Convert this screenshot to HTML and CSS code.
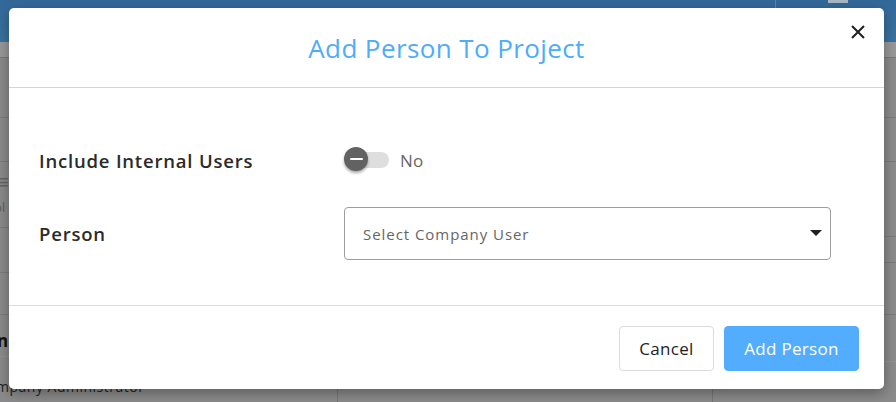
FILE: index.html
```html
<!DOCTYPE html>
<html lang="en">
<head>
<meta charset="utf-8">
<title>Add Person To Project</title>
<link rel="stylesheet" href="styles.css">
</head>
<body>
<div class="app">
  <div class="topbar">
    <div class="topbar-sep"></div>
    <div class="topbar-box"></div>
  </div>
  <div class="subbar"></div>
  <div class="table">
    <div class="col col-a">
      <div class="cell h60"></div>
      <div class="cell h44"></div>
      <div class="cell h66"><span class="menu-ic">&#8801;</span><span class="cell-txt">bl</span></div>
      <div class="cell h45"></div>
      <div class="cell h42"></div>
      <div class="cell h-last"><span class="bold-txt">n</span><span class="role-txt">mpany Administrator</span></div>
    </div>
    <div class="col col-b"></div>
    <div class="col col-c">
      <div class="cell h60"></div>
      <div class="cell h44"></div>
      <div class="cell h75"></div>
      <div class="cell h26"></div>
      <div class="cell h52"></div>
      <div class="cell h-dot"></div>
    </div>
  </div>
</div>

<div class="overlay">
  <div class="modal">
    <div class="modal-header">
      <h2 class="modal-title">Add Person To Project</h2>
      <button class="close-btn" aria-label="Close">
        <svg width="14" height="14" viewBox="0 0 14 14"><path d="M1 1L13 13M13 1L1 13" stroke="#1f1f1f" stroke-width="2" fill="none"/></svg>
      </button>
    </div>
    <div class="modal-body">
      <div class="form-row row-toggle">
        <label class="form-label">Include Internal Users</label>
        <div class="form-control toggle-wrap">
          <span class="switch"><span class="track"></span><span class="thumb"><span class="minus"></span></span></span>
          <span class="toggle-text">No</span>
        </div>
      </div>
      <div class="form-row row-select">
        <label class="form-label">Person</label>
        <div class="form-control">
          <div class="select">
            <span class="placeholder">Select Company User</span>
            <span class="caret"></span>
          </div>
        </div>
      </div>
    </div>
    <div class="modal-footer">
      <button class="btn btn-cancel">Cancel</button>
      <button class="btn btn-primary">Add Person</button>
    </div>
  </div>
</div>
</body>
</html>
```

FILE: styles.css
```css
* { box-sizing: border-box; }
html, body { margin: 0; padding: 0; }
body {
  width: 896px;
  height: 402px;
  overflow: hidden;
  position: relative;
  font-family: "Open Sans", "Noto Sans", sans-serif;
  background: #8a8a8a;
}

/* dimmed app behind the modal */
.app { display: flex; flex-direction: column; height: 402px; }
.topbar {
  height: 42px;
  background: linear-gradient(180deg, #33699a 0%, #3a74a0 100%);
  display: flex;
  justify-content: flex-end;
  align-items: flex-start;
  padding-right: 48px;
}
.topbar-sep { width: 1px; height: 10px; background: #5a88ad; margin-right: 52px; }
.topbar-box { width: 20px; height: 3px; background: #a9b8c4; }
.subbar { height: 16px; background: #999999; border-bottom: 1px solid #7a7a7a; }
.table { flex: 1; display: grid; grid-template-columns: 337px 375px 1fr; }
.col { display: flex; flex-direction: column; background: #8b8b8b; }
.col-b, .col-c { border-left: 1px solid #777; }
.cell { border-bottom: 1px solid #7b7b7b; position: relative; }
.h60 { height: 60px; }
.h44 { height: 44px; }
.h66 { height: 66px; }
.h45 { height: 45px; }
.h42 { height: 42px; }
.h75 { height: 75px; }
.h26 { height: 26px; }
.h52 { height: 52px; }
.h-last, .h-dot { flex: 1; border-bottom: 0; }
.h-dot::before {
  content: "";
  display: block;
  margin-top: 46px;
  border-top: 1px dotted #9a9a9a;
}
.menu-ic { position: absolute; left: -3px; top: 10px; font-size: 20px; color: #666; line-height: 1; }
.cell-txt { position: absolute; left: -6px; top: 36px; font-size: 13px; color: #5e5e5e; }
.bold-txt { position: absolute; left: -3px; top: 14px; font-size: 17px; font-weight: 700; color: #111; }
.role-txt { position: absolute; left: -4px; top: 62px; font-size: 14px; color: #222; letter-spacing: 0.5px; }
.h-last::after {
  content: "";
  position: absolute;
  left: 0; right: 0; top: 41px;
  border-top: 1px dotted #9a9a9a;
}

/* overlay + modal */
.overlay {
  position: absolute;
  inset: 0;
  padding: 8px 12px 0 9px;
}
.modal {
  width: 875px;
  height: 381px;
  background: #fff;
  border-radius: 5px;
  box-shadow: 0 4px 14px rgba(0, 0, 0, 0.35);
  display: flex;
  flex-direction: column;
}
.modal-header {
  height: 80px;
  border-bottom: 1px solid #d4d4d4;
  display: flex;
  align-items: center;
  justify-content: center;
  position: relative;
}
.modal-title {
  margin: 0;
  font-size: 26px;
  font-weight: 400;
  color: #4eacf8;
  letter-spacing: 0.4px;
}
.close-btn {
  position: absolute;
  right: 19px;
  top: 17px;
  border: 0;
  background: transparent;
  padding: 0;
  width: 14px;
  height: 14px;
  display: flex;
  cursor: pointer;
}

.modal-body {
  height: 218px;
  padding: 52px 53px 45px 30px;
  display: flex;
  flex-direction: column;
  gap: 27px;
  border-bottom: 1px solid #dcdcdc;
}
.form-row { display: flex; align-items: center; }
.row-toggle { height: 40px; }
.row-select { height: 53px; }
.form-label {
  width: 305px;
  font-size: 18.5px;
  font-weight: 600;
  color: #2b2b2b;
  letter-spacing: 0.8px;
}
.form-control { flex: 1; }
.toggle-wrap { display: flex; align-items: center; }
.switch { position: relative; width: 46px; height: 26px; display: block; }
.track {
  position: absolute;
  left: 2px; top: 5px;
  width: 43px; height: 16px;
  border-radius: 8px;
  background: #dedede;
}
.thumb {
  position: absolute;
  left: 0; top: 0;
  width: 24px; height: 24px;
  border-radius: 50%;
  background: #626262;
  box-shadow: 0 2px 3px rgba(0, 0, 0, 0.35);
  display: flex;
  align-items: center;
  justify-content: center;
}
.minus { width: 13px; height: 2px; background: #fff; border-radius: 1px; }
.toggle-text { margin-left: 10px; font-size: 17px; color: #666; letter-spacing: 0.3px; }

.select {
  height: 53px;
  border: 1px solid #9d9d9d;
  border-radius: 4px;
  display: flex;
  align-items: center;
  justify-content: space-between;
  padding: 0 8px 0 18px;
}
.placeholder { font-size: 15px; color: #666; letter-spacing: 0.95px; }
.caret {
  width: 0; height: 0;
  border-left: 6px solid transparent;
  border-right: 6px solid transparent;
  border-top: 6px solid #1f1f1f;
  margin-top: -2px;
}

.modal-footer {
  flex: 1;
  display: flex;
  justify-content: flex-end;
  align-items: flex-start;
  padding: 20px 25px 0 0;
  gap: 10px;
}
.btn {
  height: 45px;
  border-radius: 4px;
  font-family: inherit;
  font-size: 17px;
  letter-spacing: 0.3px;
  padding: 0;
  cursor: pointer;
}
.btn-cancel { width: 95px; background: #fff; border: 1px solid #dcdcdc; color: #1e1e1e; }
.btn-primary { width: 135px; background: #52adff; border: 1px solid #52adff; color: #fff; }
```
